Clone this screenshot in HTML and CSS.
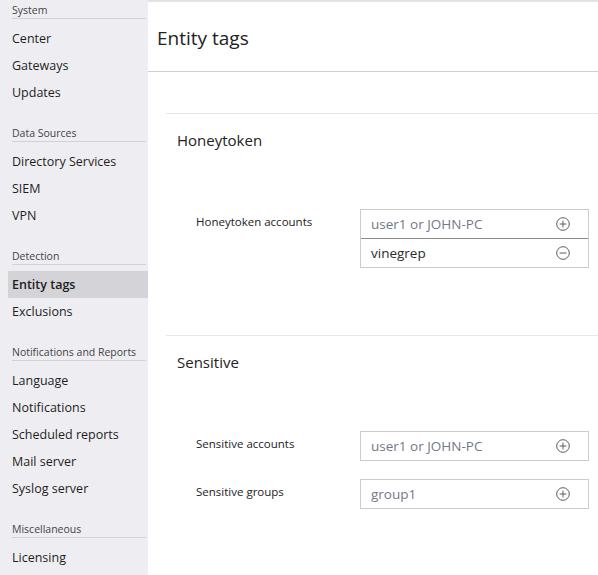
FILE: index.html
```html
<!DOCTYPE html>
<html lang="en">
<head>
<meta charset="utf-8">
<title>Entity tags</title>
<link rel="stylesheet" href="styles.css">
</head>
<body>
<aside class="sidebar">
  <section class="nav-group">
    <div class="nav-heading">System</div>
    <ul class="nav-list">
      <li class="nav-item">Center</li>
      <li class="nav-item">Gateways</li>
      <li class="nav-item">Updates</li>
    </ul>
  </section>
  <section class="nav-group">
    <div class="nav-heading">Data Sources</div>
    <ul class="nav-list">
      <li class="nav-item">Directory Services</li>
      <li class="nav-item">SIEM</li>
      <li class="nav-item">VPN</li>
    </ul>
  </section>
  <section class="nav-group">
    <div class="nav-heading">Detection</div>
    <ul class="nav-list">
      <li class="nav-item is-active">Entity tags</li>
      <li class="nav-item">Exclusions</li>
    </ul>
  </section>
  <section class="nav-group">
    <div class="nav-heading">Notifications and Reports</div>
    <ul class="nav-list">
      <li class="nav-item">Language</li>
      <li class="nav-item">Notifications</li>
      <li class="nav-item">Scheduled reports</li>
      <li class="nav-item">Mail server</li>
      <li class="nav-item">Syslog server</li>
    </ul>
  </section>
  <section class="nav-group">
    <div class="nav-heading">Miscellaneous</div>
    <ul class="nav-list">
      <li class="nav-item">Licensing</li>
    </ul>
  </section>
</aside>

<main class="main">
  <h1 class="page-title">Entity tags</h1>
  <div class="content">
    <section class="tag-section">
      <h2 class="section-title">Honeytoken</h2>
      <div class="field-row">
        <div class="field-label">Honeytoken accounts</div>
        <div class="list-box">
          <div class="list-row">
            <input class="list-input" type="text" placeholder="user1 or JOHN-PC">
            <svg class="icon" viewBox="0 0 14 14" width="14" height="14"><circle cx="7" cy="7" r="6.3"/><path d="M7 3.6v6.8M3.6 7h6.8"/></svg>
          </div>
          <div class="list-row list-row--item">
            <span class="list-value">vinegrep</span>
            <svg class="icon" viewBox="0 0 14 14" width="14" height="14"><circle cx="7" cy="7" r="6.3"/><path d="M3.6 7h6.8"/></svg>
          </div>
        </div>
      </div>
    </section>

    <section class="tag-section">
      <h2 class="section-title">Sensitive</h2>
      <div class="field-row">
        <div class="field-label">Sensitive accounts</div>
        <div class="list-box">
          <div class="list-row">
            <input class="list-input" type="text" placeholder="user1 or JOHN-PC">
            <svg class="icon" viewBox="0 0 14 14" width="14" height="14"><circle cx="7" cy="7" r="6.3"/><path d="M7 3.6v6.8M3.6 7h6.8"/></svg>
          </div>
        </div>
      </div>
      <div class="field-row field-row--next">
        <div class="field-label">Sensitive groups</div>
        <div class="list-box">
          <div class="list-row">
            <input class="list-input" type="text" placeholder="group1">
            <svg class="icon" viewBox="0 0 14 14" width="14" height="14"><circle cx="7" cy="7" r="6.3"/><path d="M7 3.6v6.8M3.6 7h6.8"/></svg>
          </div>
        </div>
      </div>
    </section>
  </div>
</main>
</body>
</html>
```

FILE: styles.css
```css
* {
  box-sizing: border-box;
}

html, body {
  margin: 0;
  padding: 0;
  height: 575px;
  overflow: hidden;
}

body {
  display: flex;
  font-family: "Open Sans", "Noto Sans", sans-serif;
  color: #222;
  background: #fff;
}

/* Sidebar */
.sidebar {
  width: 148px;
  flex: 0 0 148px;
  background: #eeeef2;
  padding-top: 3px;
}

.nav-group + .nav-group {
  margin-top: 20px;
}

.nav-heading {
  margin: 0 2px 0 12px;
  font-size: 10.5px;
  line-height: 14px;
  padding-bottom: 1px;
  color: #444;
  border-bottom: 1px solid #d2d2d6;
  white-space: nowrap;
}

.nav-list {
  list-style: none;
  margin: 6px 0 0 0;
  padding: 0;
}

.nav-item {
  height: 27px;
  line-height: 27px;
  margin-left: 8px;
  padding-left: 4px;
  font-size: 12.5px;
  color: #1e1e1e;
  white-space: nowrap;
}

.nav-item.is-active {
  background: #d4d4d8;
  font-weight: 600;
}

/* Main */
.main {
  flex: 1;
  border-top: 2px solid #e2e2e6;
  min-width: 0;
}

.page-title {
  margin: 0;
  padding: 23px 0 20px 9px;
  font-size: 19px;
  line-height: 26px;
  font-weight: 400;
  color: #222;
  border-bottom: 1px solid #cfcfd3;
}

.content {
  padding: 41px 0 0 18px;
}

.tag-section {
  border-top: 1px solid #e8e8ea;
  padding-bottom: 67px;
}

.section-title {
  margin: 16px 0 0 11px;
  font-size: 15px;
  line-height: 20px;
  font-weight: 400;
  color: #222;
}

.field-row {
  display: flex;
  margin-top: 59px;
  padding-left: 30px;
}

.field-row--next {
  margin-top: 18px;
}

.field-label {
  width: 164px;
  flex: 0 0 164px;
  font-size: 11.5px;
  line-height: 17px;
  padding-top: 4px;
  color: #222;
}

.list-box {
  width: 229px;
  border: 1px solid #cccccc;
}

.list-row {
  height: 28px;
  display: flex;
  align-items: center;
  justify-content: space-between;
  padding: 0 18px 0 10px;
}

.list-row + .list-row {
  border-top: 1px solid #8a8a8a;
}

.list-row--item {
  height: 29px;
}

.list-input {
  border: 0;
  outline: 0;
  padding: 0;
  margin: 0;
  background: transparent;
  font-family: "Open Sans", "Noto Sans", sans-serif;
  font-size: 13.5px;
  color: #333;
  width: 160px;
}

.list-input::placeholder {
  color: #737888;
  opacity: 1;
}

.list-value {
  font-size: 13.5px;
  color: #2a2a2a;
}

.icon {
  flex: 0 0 14px;
  fill: none;
  stroke: #5c5c5c;
  stroke-width: 1;
}
```
